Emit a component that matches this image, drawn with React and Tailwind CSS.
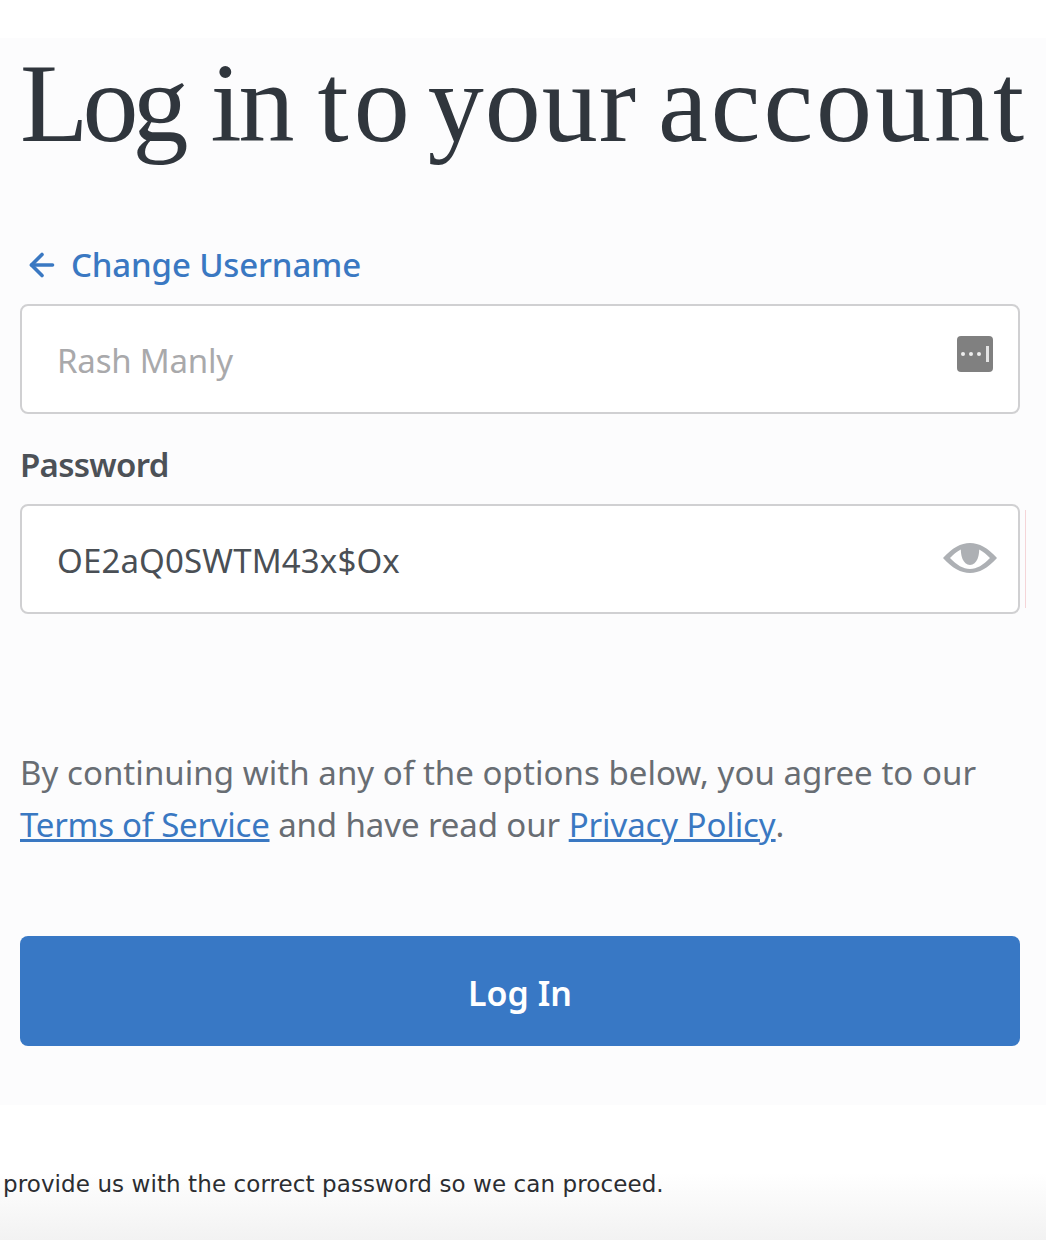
import { ArrowLeft } from "lucide-react";

function KeyIcon() {
  return (
    <svg width="36" height="36" viewBox="0 0 36 36" className="block">
      <rect x="0" y="0" width="36" height="36" rx="4" fill="#808080" />
      <circle cx="6" cy="18" r="2" fill="#eeeeee" />
      <circle cx="14" cy="18" r="2" fill="#eeeeee" />
      <circle cx="22" cy="18" r="2" fill="#eeeeee" />
      <rect x="29" y="10" width="3" height="16" fill="#e4e4e4" />
    </svg>
  );
}

function EyeIcon() {
  return (
    <svg width="54" height="32" viewBox="0 0 54 32" className="block">
      <path
        d="M0 16 C9 6 18 1 27 1 C36 1 45 6 54 16 C45 26 36 31 27 31 C18 31 9 26 0 16 Z M7 16 C14 23 20 27 27 27 C34 27 40 23 47 16 C40 9 34 5 27 5 C20 5 14 9 7 16 Z"
        fill="#adb0b4"
        fillRule="evenodd"
      />
      <path d="M18 4 C22 2 32 2 36 4 C37 13 34 23 27 23 C20 23 17 13 18 4 Z" fill="#adb0b4" />
    </svg>
  );
}

export default function App() {
  return (
    <div className="h-[1240px] w-[1046px] overflow-hidden bg-white flex flex-col font-['Noto_Sans',sans-serif]">
      <div className="h-[38px] bg-white" />

      <div className="h-[1067px] bg-[#fcfcfd] pl-5 pr-[26px]">
        <h1 className="pt-px font-['Liberation_Serif',serif] text-[112px] leading-[128px] [word-spacing:-6px] text-[#30363d] whitespace-nowrap">
          <span className="tracking-[-6px]">Log</span>{" "}
          <span className="ml-[6px] tracking-[-3px]">in</span>{" "}
          <span className="ml-[4px] tracking-[5px]">to</span>{" "}
          <span className="ml-[-9px] tracking-[1px]">your</span>{" "}
          <span className="ml-[-1px] tracking-[3px]">account</span>
        </h1>

        <a className="mt-[76px] pl-1 flex items-center gap-[11px] text-[33px] leading-[44px] font-medium tracking-[-0.15px] text-[#3a78c2]">
          <ArrowLeft size={36} strokeWidth={2.4} />
          <span>Change Username</span>
        </a>

        <div className="mt-[17px] h-[110px] rounded-[8px] border-2 border-[#d0d0d2] bg-white flex items-center justify-between pl-[35px] pr-[25px]">
          <span className="pt-1 text-[33px] tracking-[-0.2px] text-[#a9a9ab]">Rash Manly</span>
          <div className="mb-[10px]">
            <KeyIcon />
          </div>
        </div>

        <div className="mt-[31px] text-[33px] leading-[40px] font-semibold tracking-[-0.7px] text-[#4c5157]">Password</div>

        <div className="relative mt-[19px] h-[110px] rounded-[8px] border-2 border-[#d0d0d2] bg-white flex items-center justify-between pl-[35px] pr-[21px]">
          <span className="pt-1 text-[33px] tracking-[0.15px] text-[#4a4f55]">OE2aQ0SWTM43x$Ox</span>
          <div className="mb-[2px]">
            <EyeIcon />
          </div>
          <div className="absolute left-full ml-[7px] top-1 bottom-1 w-px bg-[#f5d5d8]" />
        </div>

        <p className="mt-[133px] text-[33px] leading-[52px] tracking-[0.05px] text-[#686d73]">
          By continuing with any of the options below, you agree to our
          <br />
          <a className="text-[#3a78c2] underline tracking-[-0.25px]">Terms of Service</a>{" "}
          <span className="tracking-[-0.1px]">and have read our</span>{" "}
          <a className="text-[#3a78c2] underline tracking-[-0.1px]">Privacy Policy</a>.
        </p>

        <button className="mt-[85px] w-full h-[110px] rounded-[8px] bg-[#3878c5] pt-1 text-white text-[34px] font-semibold">
          Log In
        </button>
      </div>

      <div className="flex-1 bg-gradient-to-b from-white from-[50%] to-[#f2f2f2] pl-[3px] pt-[64px]">
        <p className="font-['DejaVu_Sans',sans-serif] text-[23px] leading-[30px] tracking-[0.09px] text-[#2b2d31] whitespace-nowrap">
          provide us with the correct password so we can proceed.
        </p>
      </div>
    </div>
  );
}
